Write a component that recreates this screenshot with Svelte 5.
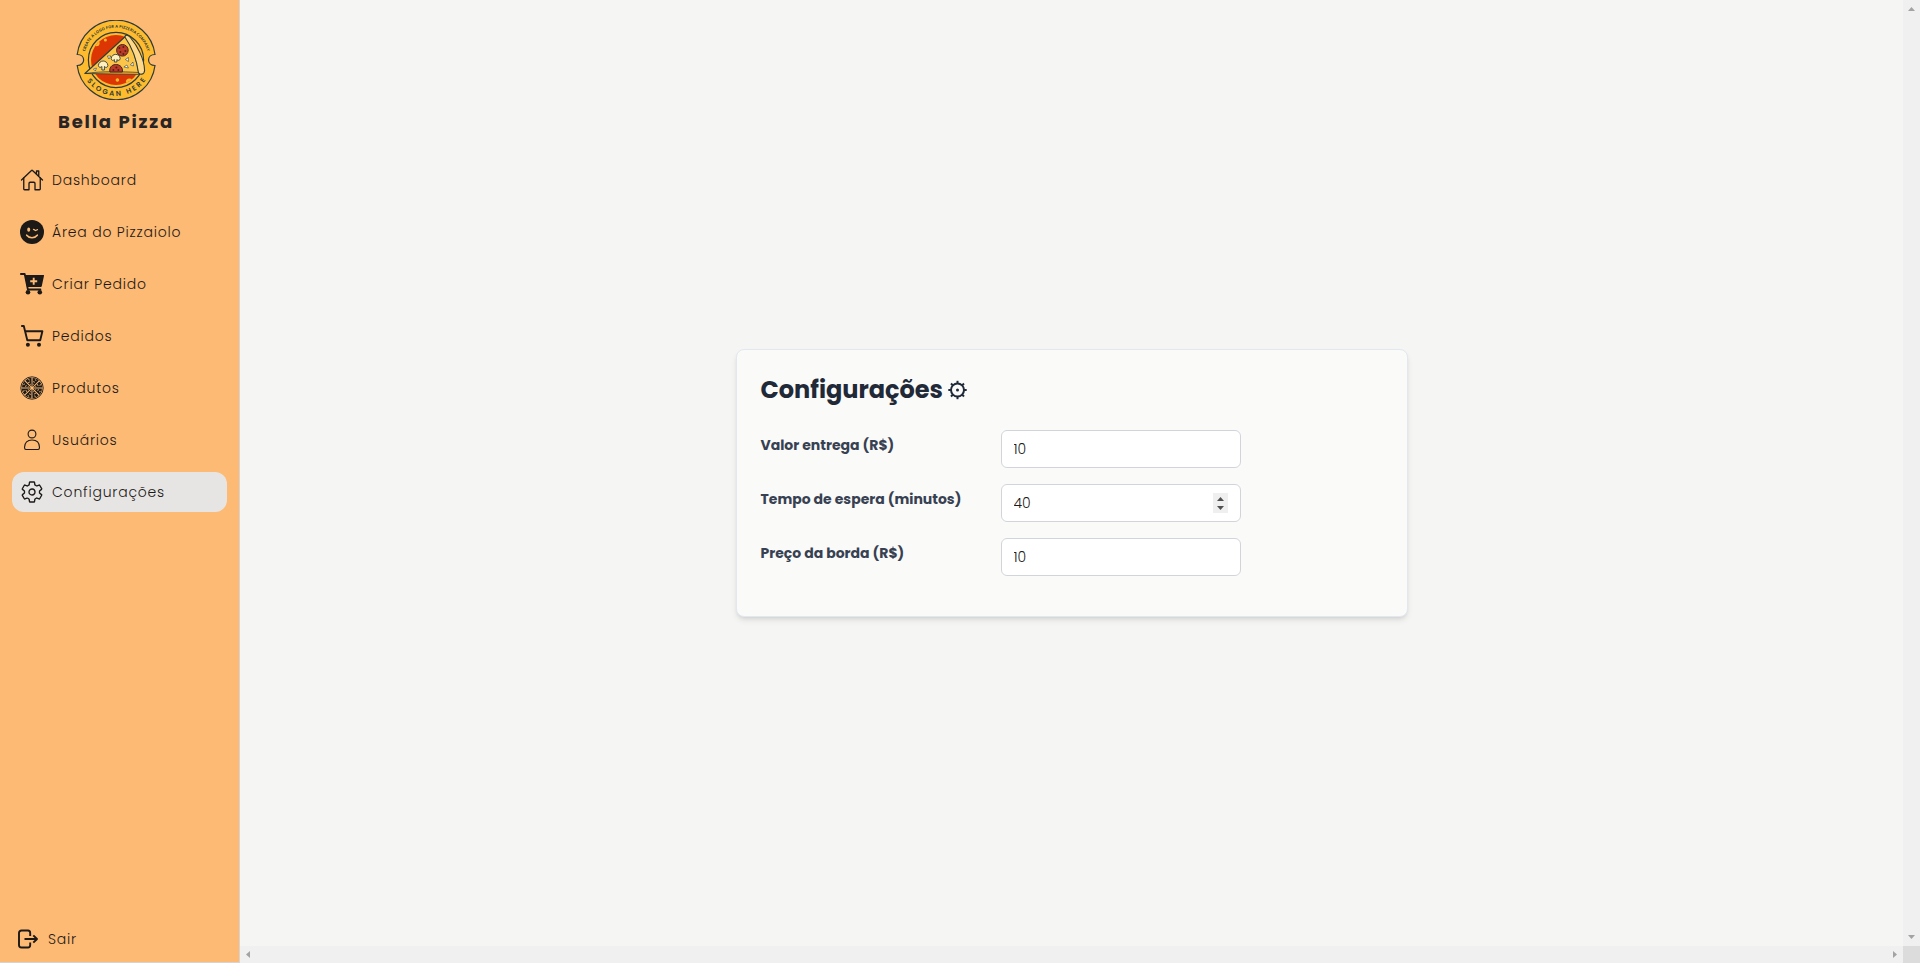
<script>
  const nav = [
    { id: 'home', label: 'Dashboard' },
    { id: 'wink', label: 'Área do Pizzaiolo' },
    { id: 'plus', label: 'Criar Pedido' },
    { id: 'cart', label: 'Pedidos' },
    { id: 'pizza', label: 'Produtos' },
    { id: 'user', label: 'Usuários' },
    { id: 'gear', label: 'Configurações', active: true }
  ];
  const fields = [
    { label: 'Valor entrega (R$)', value: '10' },
    { label: 'Tempo de espera (minutos)', value: '40', spin: true },
    { label: 'Preço da borda (R$)', value: '10' }
  ];
  const slices = [0, 45, 90, 135, 180, 225, 270, 315];
</script>

<div class="page">
  <aside>
    <div class="brand">
      <svg width="80" height="80" viewBox="0 0 80 80">
        <defs>
          <path id="arcTop" d="M7.800 40a32.3 32.3 0 0 1 64.6 0" />
          <path id="arcBottom" d="M4.200 40a35.8 35.8 0 0 0 71.6 0" />
          <clipPath id="disc"><circle cx="39.6" cy="40" r="25" /></clipPath>
        </defs>
        <g transform="translate(.4 0)">
          <path d="M.8 34.500A39.200 39.200 0 0 1 78.600 34.500C70 34.500 70 45.500 78.600 45.500A39.200 39.200 0 0 1 .8 45.500C9.400 45.500 9.400 34.500 .8 34.500Z" fill="#ffbb2e" stroke="#2d3c3a" stroke-width="1.200" />
          <circle cx="39.6" cy="40" r="27.600" fill="#ffbb2e" stroke="#2d3c3a" stroke-width="1.200" />
          <circle cx="39.6" cy="40" r="25" fill="#dc3604" />
          <g clip-path="url(#disc)" fill="#ffbb2e">
            <circle cx="20" cy="23" r="3.200" /><circle cx="16" cy="26" r="2" /><circle cx="29" cy="20" r="1.5" />
            <circle cx="53" cy="62" r="3.500" /><circle cx="41" cy="60" r="1.8" />
          </g>
          <path d="M8.500 53.500 50 15.500C55 25 60 38 62.500 53.500Z" fill="#fcc547" stroke="#2d3c3a" stroke-width="1.100" stroke-linejoin="round" />
          <path d="M8.500 53.500C26 51 45 51.500 62.500 52.500v2Z" fill="#e8a02e" stroke="#2d3c3a" stroke-width=".7" />
          <path d="M48.500 17C49 14 52 15 54 17.500C61 26 68 39 68.200 50.500C68 55 63 55 62 52.500C60.500 41 56 28 48.500 17Z" fill="#ffd987" stroke="#2d3c3a" stroke-width="1.100" />
          <g fill="#bd3926" stroke="#42251f" stroke-width="1"><circle cx="46" cy="30.300" r="5.800" /><path d="M33.500 52c-2-10 14-10 12.500 0Z" /></g>
          <g fill="#53211c"><circle cx="43" cy="28" r="1" /><circle cx="47" cy="27" r="1" /><circle cx="49" cy="31" r="1" /><circle cx="44" cy="32" r="1" /><circle cx="47" cy="34" r="1" /><circle cx="37" cy="50" r="1" /><circle cx="42" cy="50" r="1" /><circle cx="40" cy="47.500" r="1" /></g>
          <g fill="#fff0bd" stroke="#2d3c3a" stroke-width=".9">
            <path d="M22 45.500c.5-6 9-6 9.500 0 0 2-2.500 2.500-3.500 1v3.500h-2.500v-3.500c-1 1.500-3.500 1-3.500-1Z" />
            <path d="M34.800 38.500c.5-5.500 8.500-5.500 9 0 0 2-2.500 2.500-3.300 1v2.500H38v-2.500c-1 1.500-3.200 1-3.200-1Z" />
          </g>
          <path fill="#fff" stroke="#2d3c3a" stroke-width=".6" d="m31 36 1.500 3 2-3ZM47.500 47l3-2 1.500 3ZM49 39.500l3-2v4ZM54 45l2.500-3 .5 4ZM17 49l3-1-1 3Z" />
        </g>
        <g fill="#2d3c3a" font-family="'Open Sans', sans-serif" font-weight="700">
          <text font-size="3.900"><textPath href="#arcTop" startOffset="8.500" textLength="84">CREATE A LOGO FOR A PIZZERIA COMPANY</textPath></text>
          <text font-size="7" font-family="Poppins, sans-serif" font-weight="600"><textPath href="#arcBottom" startOffset="22" textLength="69">SLOGAN HERE</textPath></text>
        </g>
      </svg>
      <strong>Bella Pizza</strong>
    </div>

    <nav>
      {#each nav as item}
        <a class:active={item.active} href="#{item.id}">
          <svg width="24" height="24" viewBox="0 0 24 24" fill="none" stroke="currentColor">
            {#if item.id === 'home'}
              <g transform="scale(.046875)" stroke-width="28" stroke-linecap="round" stroke-linejoin="round">
                <path d="M80 212v236a16 16 0 0 0 16 16h96V328a24 24 0 0 1 24-24h80a24 24 0 0 1 24 24v136h96a16 16 0 0 0 16-16V212" />
                <path d="M480 256 266.890 52c-5-5.280-16.690-5.340-21.780 0L32 256M400 179V64h-48v69" />
              </g>
            {:else if item.id === 'wink'}
              <circle cx="12" cy="12" r="12" fill="currentColor" stroke="none" />
              <ellipse cx="8.700" cy="9.700" rx="1.500" ry="2.100" fill="#fdba74" stroke="none" />
              <path d="M13.500 9.300c1.200.2 1.500 1.500 2.400 1.200.6-.2.800-.8 1.600-.9" stroke="#fdba74" stroke-width="1.200" stroke-linecap="round" />
              <path d="M6.700 15.200c2.500 3.300 8.100 3.300 10.600 0" stroke="#fdba74" stroke-width="1.600" stroke-linecap="round" />
            {:else if item.id === 'plus'}
              <path d="M.9 2h3.800l3.200 15.500h12.500" stroke-width="1.800" stroke-linecap="round" stroke-linejoin="round" />
              <path d="M4.800 3h18.600c.5 0 .7.400.6.800l-2.200 10.200c-.1.600-.5.900-1 .9H7Z" fill="currentColor" stroke="none" />
              <path d="M13.700 5.800v7M10.200 9.300h7" stroke="#fdba74" stroke-width="1.900" />
              <circle cx="8" cy="20.300" r="2.300" fill="currentColor" stroke="none" /><circle cx="19.800" cy="20.300" r="2.300" fill="currentColor" stroke="none" />
            {:else if item.id === 'cart'}
              <path d="M1.200 2h2.600l3.500 14.200h12.900l2.200-9H5.300" stroke-width="1.900" stroke-linejoin="round" />
              <circle cx="7.900" cy="20.800" r="2" fill="currentColor" stroke="none" /><circle cx="19" cy="20.800" r="2" fill="currentColor" stroke="none" />
            {:else if item.id === 'pizza'}
              <circle cx="12" cy="12" r="11.200" stroke-width=".9" />
              {#each slices as angle}
                <g transform="rotate({angle} 12 12)">
                  <path d="M12.500 10.900 12.600 2.100c2.400 0 4.500.8 6.300 2.300Z" fill="currentColor" stroke="none" />
                  <path d="m13 5.500 2 .8M15.300 3.300l.8 1.700M13 8l.8.500" stroke="#fdba74" stroke-width=".8" />
                </g>
              {/each}
            {:else if item.id === 'user'}
              <circle cx="12" cy="6" r="3.900" stroke-width="1.100" />
              <path d="M4.500 19.500c0-5.200 3-7.500 7.500-7.500s7.500 2.300 7.500 7.500c0 1.400-.6 2-1.500 2H6c-.9 0-1.500-.6-1.500-2Z" stroke-width="1.100" />
            {:else}
              <path transform="scale(.046875)" stroke-width="29" stroke-linecap="round" stroke-linejoin="round" d="M262.290 192.310a64 64 0 1 0 57.400 57.400 64.130 64.130 0 0 0-57.400-57.400zM416.390 256a154.340 154.340 0 0 1-1.530 20.790l45.210 35.460a10.810 10.810 0 0 1 2.450 13.750l-42.770 74a10.810 10.810 0 0 1-13.140 4.590l-44.900-18.080a16.110 16.110 0 0 0-15.170 1.750A164.480 164.480 0 0 1 325 400.800a15.940 15.940 0 0 0-8.820 12.140l-6.730 47.890a11.080 11.080 0 0 1-10.680 9.170h-85.540a11.110 11.110 0 0 1-10.690-8.870l-6.720-47.820a16.070 16.070 0 0 0-9-12.220 155.300 155.300 0 0 1-21.460-12.570 16 16 0 0 0-15.110-1.710l-44.890 18.070a10.810 10.810 0 0 1-13.140-4.580l-42.770-74a10.800 10.800 0 0 1 2.450-13.750l38.210-30a16.050 16.050 0 0 0 6-14.080c-.36-4.170-.58-8.330-.58-12.500s.21-8.270.58-12.350a16 16 0 0 0-6.070-13.940l-38.190-30A10.810 10.810 0 0 1 49.480 186l42.770-74a10.810 10.810 0 0 1 13.140-4.590l44.900 18.080a16.110 16.110 0 0 0 15.170-1.750A164.480 164.480 0 0 1 187 111.200a15.940 15.940 0 0 0 8.820-12.140l6.730-47.890A11.080 11.080 0 0 1 213.230 42h85.540a11.110 11.110 0 0 1 10.690 8.870l6.720 47.820a16.070 16.070 0 0 0 9 12.220 155.300 155.300 0 0 1 21.460 12.570 16 16 0 0 0 15.110 1.710l44.890-18.070a10.810 10.810 0 0 1 13.140 4.580l42.770 74a10.800 10.800 0 0 1-2.450 13.750l-38.210 30a16.050 16.050 0 0 0-6.050 14.080c.33 4.140.55 8.300.55 12.470z" />
            {/if}
          </svg>
          <span>{item.label}</span>
        </a>
      {/each}
    </nav>

    <a class="exit" href="#sair">
      <svg width="22" height="20" viewBox="0 0 22 20" fill="none" stroke="currentColor" stroke-width="1.900" stroke-linejoin="round">
        <path d="M12.200 7V4C12.200 2.500 11.500 1.500 10 1.500H3.500C2 1.500 1 2.500 1 4v12C1 17.500 2 18.500 3.500 18.500H10c1.500 0 2.200-1 2.200-2.500v-2.500M6.500 10h12.500M15.300 6.300 19 10l-3.700 3.700" />
      </svg>
      <span>Sair</span>
    </a>
  </aside>

  <div class="view">
    <main>
      <section>
        <h1>
          <span>Configurações</span>
          <svg width="20" height="20" viewBox="0 0 20 20" fill="none" stroke="currentColor" stroke-width="2">
            <circle cx="9.500" cy="10" r="6.500" />
            <circle cx="9.500" cy="10" r="1.500" fill="currentColor" stroke="none" />
            {#each slices as angle}
              <path transform="rotate({angle} 9.500 10)" d="M9.500 .8v3" />
            {/each}
          </svg>
        </h1>
        {#each fields as field}
          <div class="row">
            <label for={field.label}>{field.label}</label>
            <div class="field">
              <input id={field.label} value={field.value} />
              {#if field.spin}
                <svg width="15" height="20" viewBox="0 0 15 20"><path fill="#efefef" d="M0 0h15v20H0z" /><path fill="#505050" d="m4 8 3.500-4L11 8ZM4 13h7l-3.500 4Z" /></svg>
              {/if}
            </div>
          </div>
        {/each}
      </section>
    </main>
    <div class="vbar">
      <svg width="17" height="17" viewBox="0 0 17 17"><path fill="#a3a3a3" d="m5 11 3.500-4 3.500 4Z" /></svg>
      <svg width="17" height="17" viewBox="0 0 17 17"><path fill="#a3a3a3" d="M5 6h7l-3.500 4Z" /></svg>
    </div>
    <div class="hbar">
      <svg width="17" height="17" viewBox="0 0 17 17"><path fill="#a3a3a3" d="M10 5v7L6 8.500Z" /></svg>
      <svg width="17" height="17" viewBox="0 0 17 17"><path fill="#a3a3a3" d="M7 5v7l4-3.500Z" /></svg>
    </div>
    <div class="corner"></div>
  </div>
</div>

<style>
  :global(body) { margin: 0; overflow: hidden; }
  * { box-sizing: border-box; }
  .page { display: flex; width: 1920px; height: 963px; font-family: Poppins, Inter, sans-serif; font-size: 14px; color: #1c1917; background: #f5f5f4; }
  svg { display: block; flex: none; }
  aside { width: 240px; padding: 20px 12px 12px; display: flex; flex-direction: column; background: #fdba74; border: solid #d6d3d1; border-width: 0 1px 1px 0; }
  .brand { display: flex; flex-direction: column; align-items: center; padding-right: 7px; }
  .brand strong { font-size: 18px; line-height: 28px; margin-top: 8px; font-weight: 700; color: #292524; letter-spacing: 1.8px; white-space: nowrap; }
  nav { display: flex; flex-direction: column; gap: 12px; margin-top: 24px; }
  a { color: #1c1917; text-decoration: none; }
  nav a { height: 40px; display: flex; align-items: center; gap: 8px; padding: 0 8px; border-radius: 12px; font-weight: 300; letter-spacing: .8px; white-space: nowrap; }
  nav a.active { background: #e7e5e4; }
  .exit { display: flex; align-items: center; gap: 8px; margin-top: auto; padding-left: 6px; height: 22px; font-weight: 300; letter-spacing: .8px; }
  .view { flex: 1; display: grid; grid-template: 946px 17px / 1fr 17px; }
  main { display: flex; align-items: flex-start; justify-content: center; padding-top: 349px; }
  section { width: 672px; height: 268px; margin-left: 1px; padding: 24px 24px 0 23.5px; border: 1px solid #e2e8f0; border-radius: 8px; background: #fafaf9; box-shadow: 0 4px 6px -1px #0000001a, 0 2px 4px -2px #0000001a; }
  h1 { display: flex; align-items: center; gap: 5px; margin: 0 0 24px; height: 32px; font-size: 24px; line-height: 32px; font-weight: 700; color: #1f2937; }
  .row { display: flex; height: 38px; margin-bottom: 16px; }
  label { width: 240px; padding-top: 5px; line-height: 20px; font-weight: 700; color: #374151; white-space: nowrap; }
  .field { width: 240px; height: 38px; display: flex; align-items: center; padding: 0 12px; border: 1px solid #d1d5db; border-radius: 6px; background: #fff; }
  input { flex: 1; min-width: 0; border: 0; padding: 0; outline: 0; font: 300 14px Poppins, Inter, sans-serif; color: #1c1917; background: none; }
  .vbar { background: #f0f0f0; display: flex; flex-direction: column; justify-content: space-between; }
  .hbar { background: #f0f0f0; display: flex; justify-content: space-between; }
  .corner { background: #dcdcdc; }
</style>
